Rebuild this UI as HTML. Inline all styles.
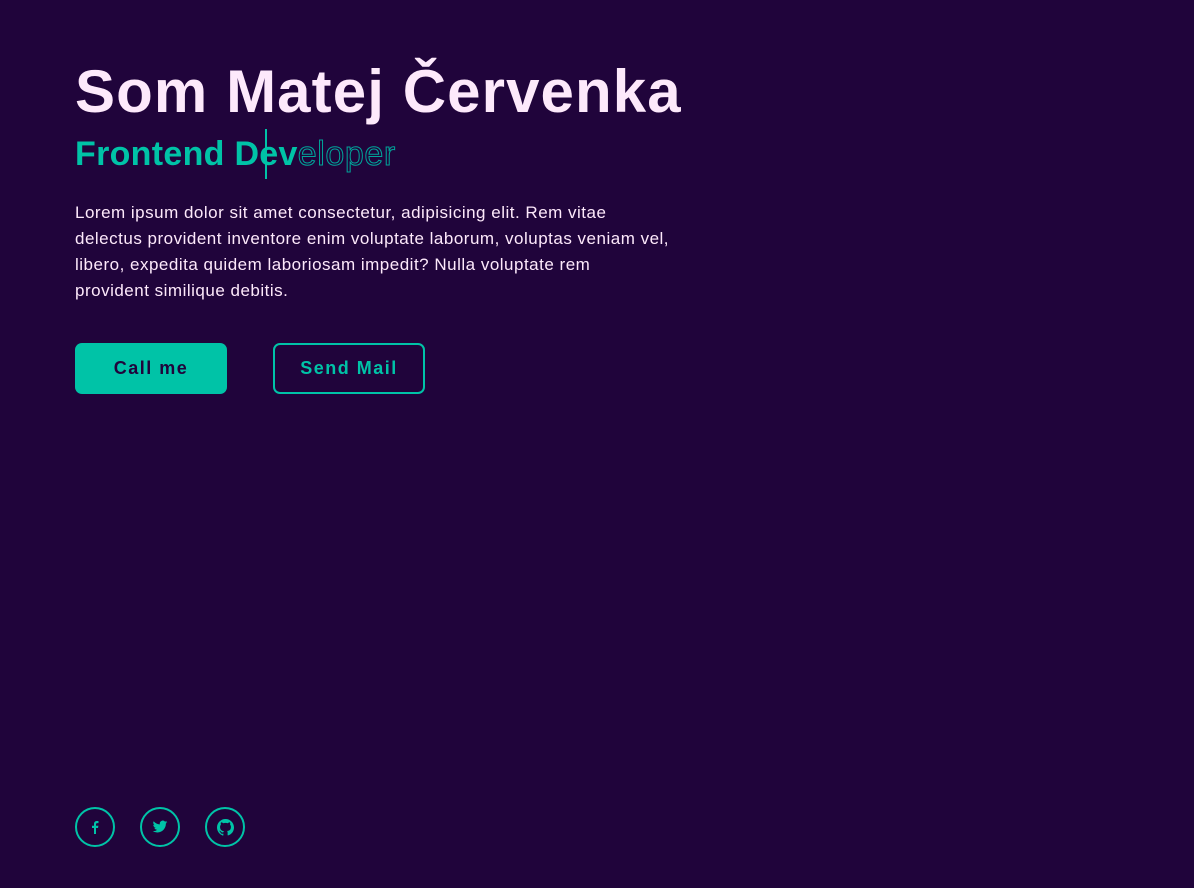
<!DOCTYPE html>
<html><head><meta charset="utf-8"><style>
body{margin:0;width:1194px;height:888px;background:#20043b;font-family:"Liberation Sans",sans-serif;overflow:hidden;position:relative}
h1{position:absolute;left:75px;top:52px;margin:0;font-size:60px;font-weight:700;color:#fde9fb;letter-spacing:1.1px;line-height:80px;white-space:nowrap}
.sub{position:absolute;left:75px;top:134px;font-size:34px;font-weight:700;letter-spacing:0.3px;line-height:40px;white-space:nowrap}
.sub .a{color:#00c3a7}
.sub .b{color:transparent;-webkit-text-stroke:1px #00a59a;font-weight:400;letter-spacing:0.6px}
.cur{position:absolute;left:265px;top:129px;width:2px;height:50px;background:#00c3a7}
p{position:absolute;left:75px;top:200px;margin:0;font-size:17px;line-height:26px;color:#fde9fb;letter-spacing:0.5px;white-space:nowrap}
.btn{position:absolute;top:343px;width:152px;height:51px;border-radius:7px;box-sizing:border-box;font-weight:700;font-size:18px;letter-spacing:1.5px;display:flex;align-items:center;justify-content:center}
.b1{left:75px;background:#00c3a7;color:#20043b}
.b2{left:273px;border:2px solid #00c3a7;color:#00c3a7}
.ic{position:absolute;top:807px;width:36px;height:36px;border:2px solid #00c3a7;border-radius:50%;display:flex;align-items:center;justify-content:center}
</style></head><body>
<h1>Som Matej Červenka</h1>
<div class="sub"><span class="a">Frontend Dev</span><span class="b">eloper</span></div>
<div class="cur"></div>
<p>Lorem ipsum dolor sit amet consectetur, adipisicing elit. Rem vitae<br>delectus provident inventore enim voluptate laborum, voluptas veniam vel,<br>libero, expedita quidem laboriosam impedit? Nulla voluptate rem<br>provident similique debitis.</p>
<div class="btn b1">Call me</div>
<div class="btn b2">Send Mail</div>
<div class="ic" style="left:75px"><svg width="16" height="16" viewBox="0 0 16 16"><path d="M9 15V9h2l.4-2.3H9V5.3c0-.7.3-1.2 1.2-1.2h1.3V2.1C11.2 2 10.6 2 9.9 2 8.3 2 7 3 7 4.9v1.8H5V9h2v6z" fill="#00c3a7"/></svg></div>
<div class="ic" style="left:140px"><svg width="16" height="16" viewBox="0 0 24 24"><path d="M23 4.6c-.8.4-1.7.6-2.6.7.9-.6 1.6-1.4 2-2.5-.9.5-1.9.9-2.9 1.1A4.5 4.5 0 0 0 11.8 8 12.8 12.8 0 0 1 2.5 3.3a4.5 4.5 0 0 0 1.4 6c-.7 0-1.4-.2-2-.6 0 2.2 1.6 4 3.6 4.4-.7.2-1.4.2-2 .1.6 1.8 2.2 3.1 4.2 3.1A9 9 0 0 1 1 18.2 12.8 12.8 0 0 0 8 20.2c8.3 0 12.8-6.9 12.8-12.8v-.6c.9-.6 1.6-1.4 2.2-2.2z" fill="#00c3a7"/></svg></div>
<div class="ic" style="left:205px"><svg width="17" height="17" viewBox="0 0 16 16"><path fill="#00c3a7" d="M8 0C3.6 0 0 3.6 0 8c0 3.5 2.3 6.5 5.5 7.6.4.1.5-.2.5-.4v-1.4c-2.2.5-2.7-1.1-2.7-1.1-.4-.9-.9-1.2-.9-1.2-.7-.5.1-.5.1-.5.8.1 1.2.8 1.2.8.7 1.2 1.9.9 2.3.7.1-.5.3-.9.5-1.1-1.8-.2-3.6-.9-3.6-4 0-.9.3-1.6.8-2.1-.1-.2-.4-1 .1-2.1 0 0 .7-.2 2.2.8.6-.2 1.3-.3 2-.3s1.4.1 2 .3c1.5-1 2.2-.8 2.2-.8.4 1.1.2 1.9.1 2.1.5.6.8 1.3.8 2.1 0 3.1-1.9 3.7-3.6 3.9.3.3.5.8.5 1.5v2.2c0 .2.1.5.6.4C13.7 14.5 16 11.5 16 8c0-4.4-3.6-8-8-8z"/></svg></div>
</body></html>
